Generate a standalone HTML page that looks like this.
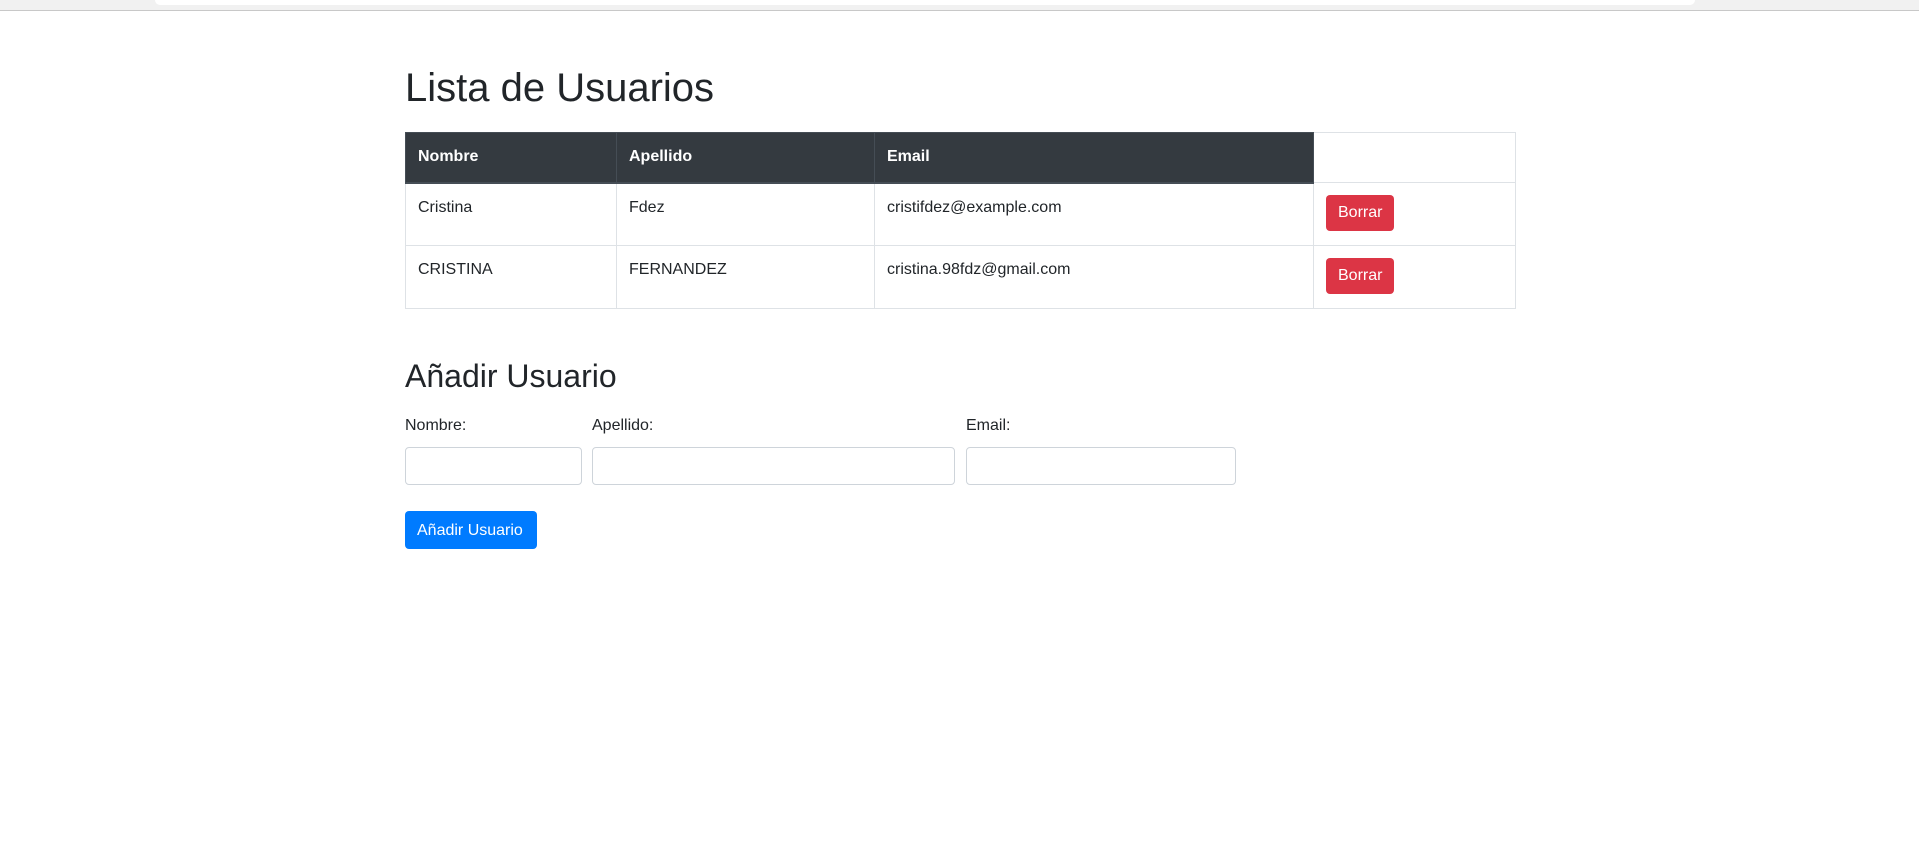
<!DOCTYPE html>
<html><head><meta charset="utf-8"><style>
*{box-sizing:border-box}
body{margin:0;width:1919px;height:864px;background:#fff;font-family:"Liberation Sans",Arial,sans-serif;font-size:16px;color:#212529;position:relative;overflow:hidden}
.top{position:absolute;left:0;top:0;width:1919px;height:11px;background:#f1f1f1;border-bottom:1px solid #c8c8c8}
.top .bar{position:absolute;left:155px;top:0;width:1540px;height:5px;background:#fff;border-radius:0 0 6px 6px}
h1{position:absolute;left:405px;top:64px;margin:0;font-size:40px;font-weight:400;line-height:48px}
h2{position:absolute;left:405px;top:357px;margin:0;font-size:32px;font-weight:400;line-height:38px}
table{position:absolute;left:405px;top:132px;width:1110px;border-collapse:collapse;table-layout:fixed}
td,th{border:1px solid #dee2e6;padding:12px;text-align:left;vertical-align:top;line-height:24px}
th{font-weight:700;height:50px}
th.d{background:#343a40;color:#fff;border-color:#454d55;border-bottom:2px solid #454d55}
td{height:63px}
.btn{display:inline-block;border-radius:4px;color:#fff;padding:6px 12px;line-height:24px;font-size:16px}
.red{background:#dc3545}
.blue{background:#007bff;position:absolute;left:405px;top:511px;height:38px;width:132px;padding-top:8px}
label{position:absolute;top:414px;line-height:24px}
.in{position:absolute;top:447px;height:38px;border:1px solid #ced4da;border-radius:4px;background:#fff}
</style></head><body>
<div class="top"><div class="bar"></div></div>
<h1>Lista de Usuarios</h1>
<table>
<colgroup><col style="width:211px"><col style="width:258px"><col style="width:439px"><col style="width:202px"></colgroup>
<tr><th class="d">Nombre</th><th class="d">Apellido</th><th class="d">Email</th><th></th></tr>
<tr><td>Cristina</td><td>Fdez</td><td>cristifdez@example.com</td><td><span class="btn red">Borrar</span></td></tr>
<tr><td>CRISTINA</td><td>FERNANDEZ</td><td>cristina.98fdz@gmail.com</td><td><span class="btn red">Borrar</span></td></tr>
</table>
<h2>Añadir Usuario</h2>
<label style="left:405px">Nombre:</label>
<label style="left:592px">Apellido:</label>
<label style="left:966px">Email:</label>
<div class="in" style="left:405px;width:177px"></div>
<div class="in" style="left:592px;width:363px"></div>
<div class="in" style="left:966px;width:270px"></div>
<span class="btn blue">Añadir Usuario</span>
</body></html>
